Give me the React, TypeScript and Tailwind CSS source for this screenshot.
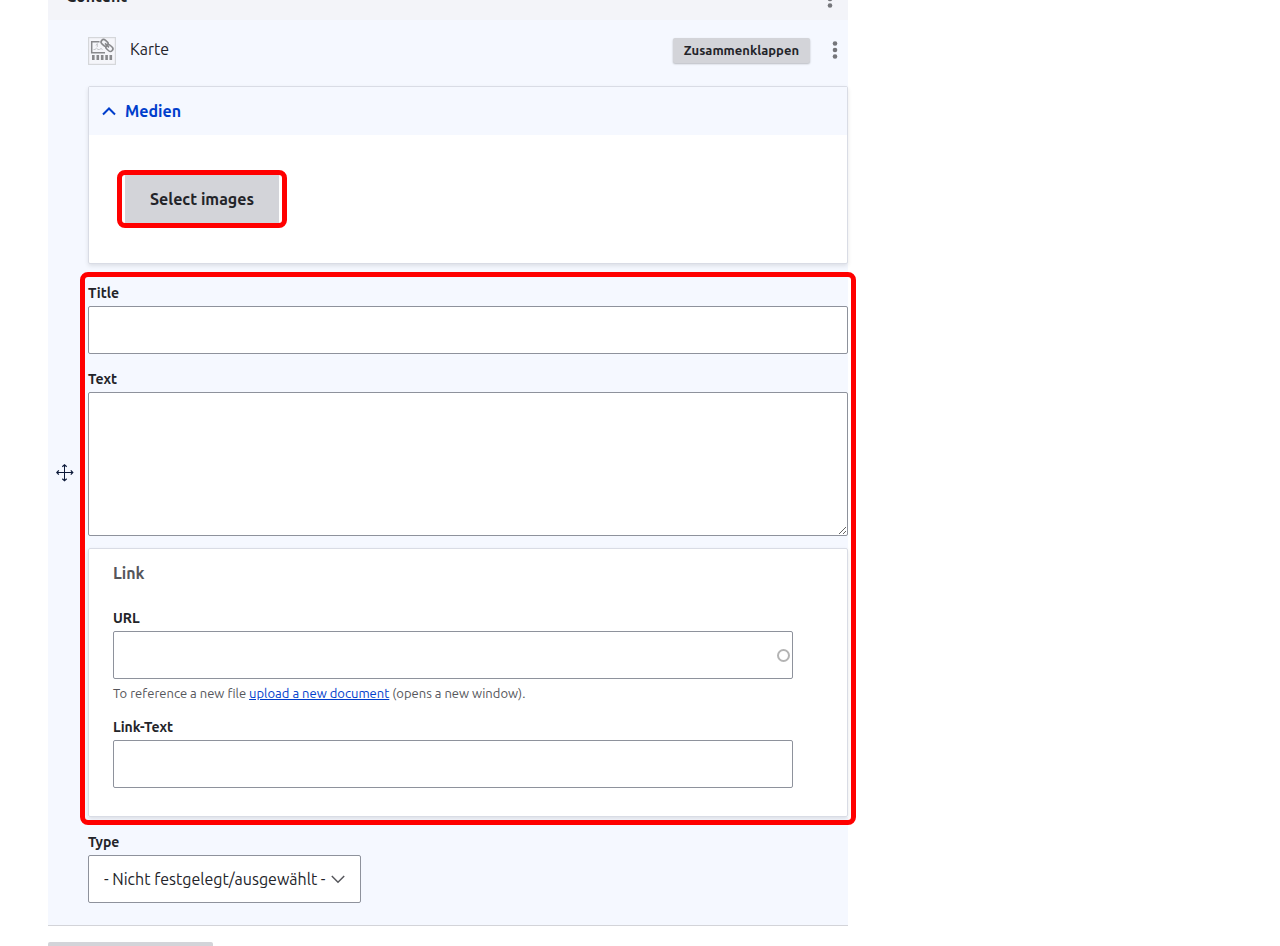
import React, { useState } from 'react';

const inputClass =
  'block w-full rounded-[2px] border border-[#8e929c] bg-white px-4 text-base text-[#232429] focus:outline-none focus:ring-2 focus:ring-[#26a769]';

const Label: React.FC<{ htmlFor: string; children: React.ReactNode }> = ({ htmlFor, children }) => (
  <label htmlFor={htmlFor} className="block text-[14px] leading-[18px] font-bold">
    {children}
  </label>
);

const Dots: React.FC = () => (
  <svg width="6" height="18" viewBox="0 0 6 18" fill="#75767b">
    <circle cx="3" cy="2.5" r="2.3" />
    <circle cx="3" cy="9" r="2.3" />
    <circle cx="3" cy="15.5" r="2.3" />
  </svg>
);

const CardTypeIcon: React.FC = () => (
  <svg width="28" height="28" viewBox="0 0 28 28" fill="none">
    <rect x="0.5" y="0.5" width="27" height="27" fill="#f5f6fa" stroke="#d5d7da" strokeWidth="1.4" />
    <path d="M11.5 4.7H3.7v11H17" stroke="#88898c" strokeWidth="1.5" />
    <path d="M5.5 12.5h1.5l1.5-1.3 1.5 1.3h1.5l1.5-1 1.5 1M9.3 6.5v3.5M8 8.5l1.3-2" stroke="#c3c5c8" />
    <g stroke="#88898c" strokeWidth="1.6">
      <rect x="12.8" y="3.4" width="7.6" height="5" rx="2.5" transform="rotate(42 16.6 5.9)" />
      <rect x="17.6" y="8.5" width="7.6" height="5" rx="2.5" transform="rotate(42 21.4 11)" />
      <path d="M17 6.4l4 4" />
    </g>
    <path d="M5.3 18v5M9.8 18v5M14.2 18v5M18.6 18v5M22.8 18v5" stroke="#88898c" strokeWidth="2.6" />
  </svg>
);

const DragIcon: React.FC = () => (
  <svg width="18" height="18" viewBox="0 0 18 18" fill="none" stroke="#0d1a3a">
    <path d="M8.5 1v16M1 8.5h16" />
    <path d="M6.3 2.8L8.5 .8l2.2 2M6.3 14.8l2.2 2 2.2-2M2.8 6.3L.8 8.5l2 2.2M14.8 6.3l2 2.2-2 2.2" strokeWidth="1.2" />
  </svg>
);

const Chevron: React.FC<{ open: boolean }> = ({ open }) => (
  <svg width="16" height="16" viewBox="0 0 16 16" fill="none" stroke="currentColor" strokeWidth="2">
    <path d={open ? 'M2 11.5l6-6 6 6' : 'M2 5l6 6 6-6'} />
  </svg>
);

export default function App() {
  const [open, setOpen] = useState(true);

  return (
    <div className="h-screen overflow-hidden bg-white px-12 font-['Ubuntu','Noto_Sans',sans-serif] text-[#232429]">
      <div className="w-full max-w-[800px]">
        {/* Field header, scrolled mostly out of view */}
        <header className="flex h-5 items-end justify-between bg-[#f3f4f9] pr-[15px] pb-3 pl-[18px]">
          <h2 className="text-base leading-6 font-bold">Content</h2>
          <button type="button" aria-label="More actions" className="leading-none">
            <Dots />
          </button>
        </header>

        <section className="flex border-b border-[#d3d4d9] bg-[#f5f8ff] pb-[22px]">
          <div className="flex w-10 shrink-0 items-center justify-center pr-1.5">
            <button type="button" aria-label="Drag to re-order" className="mt-[22px] cursor-move">
              <DragIcon />
            </button>
          </div>

          <div className="min-w-0 flex-1">
            <div className="flex h-[66px] items-center pr-[10px] pb-1.5">
              <div className="pt-0.5">
                <CardTypeIcon />
              </div>
              <span className="ml-[14px] pb-0.5 text-base leading-6">Karte</span>
              <button
                type="button"
                className="ml-auto h-[25px] rounded-[2px] bg-[#d3d4d9] px-[11px] text-[13px] leading-[25px] font-bold shadow-[0_1px_2px_rgba(0,0,0,0.25)]"
              >
                Zusammenklappen
              </button>
              <button type="button" aria-label="More actions" className="ml-[22px]">
                <Dots />
              </button>
            </div>

            {/* Media */}
            <div className="rounded-[2px] border border-[#d9dce5] bg-white shadow-[0_2px_4px_rgba(0,0,0,0.1)]">
              <button
                type="button"
                aria-expanded={open}
                onClick={() => setOpen(!open)}
                className="flex h-12 w-full items-center gap-2 bg-[#f5f8ff] px-3 text-base font-bold text-[#003ecc]"
              >
                <Chevron open={open} />
                Medien
              </button>
              {open && (
                <div className="px-7 py-[35px]">
                  <div className="inline-block rounded-lg border-[5px] border-[#ff0000] px-[3px] align-top">
                    <button type="button" className="block h-12 bg-[#d3d4d9] px-[25px] text-base font-bold">
                      Select images
                    </button>
                  </div>
                </div>
              )}
            </div>

            {/* Content fields */}
            <div className="relative mt-5">
              <div className="pointer-events-none absolute -top-3 -right-2 -bottom-2 -left-2 z-10 rounded-lg border-[5px] border-[#ff0000]" />
              <Label htmlFor="title">Title</Label>
              <input id="title" type="text" className={`${inputClass} mt-1 h-12`} />

              <div className="mt-4">
                <Label htmlFor="text">Text</Label>
                <textarea id="text" className={`${inputClass} mt-1 h-36 resize-y`} />
              </div>

              <fieldset className="mt-3 rounded-[2px] border border-[#d9dce5] bg-white pt-3 pr-[54px] pb-7 pl-6 shadow-[0_2px_4px_rgba(0,0,0,0.1)]">
                <legend className="float-left w-full text-base leading-6 font-bold text-[#55565b]">Link</legend>
                <div className="clear-both pt-6">
                  <Label htmlFor="url">URL</Label>
                  <div className="relative mt-1">
                    <input id="url" type="text" className={`${inputClass} h-12`} />
                    <span className="absolute top-[18px] right-[3px] h-[13px] w-[13px] rounded-full border-[2px] border-[#b4b4b4]" />
                  </div>
                  <p className="mt-1 text-[13px] leading-5 text-[#55565b]">
                    To reference a new file{' '}
                    <a href="#" className="text-[#003ecc] underline">
                      upload a new document
                    </a>{' '}
                    (opens a new window).
                  </p>
                </div>
                <div className="mt-[15px]">
                  <Label htmlFor="link-text">Link-Text</Label>
                  <input id="link-text" type="text" className={`${inputClass} mt-1 h-12`} />
                </div>
              </fieldset>
            </div>

            <div className="mt-4">
              <Label htmlFor="type">Type</Label>
              <div className="relative mt-1 w-[273px]">
                <select
                  id="type"
                  className="h-12 w-full appearance-none rounded-[2px] border border-[#8e929c] bg-white pl-[15px] text-base"
                >
                  <option>- Nicht festgelegt/ausgewählt -</option>
                </select>
                <svg
                  width="14"
                  height="9"
                  viewBox="0 0 14 9"
                  fill="none"
                  stroke="#55565b"
                  strokeWidth="1.5"
                  className="pointer-events-none absolute top-5 right-4"
                >
                  <path d="M.8 1l6.2 6.2L13.2 1" />
                </svg>
              </div>
            </div>
          </div>
        </section>

        <button type="button" aria-label="Add" className="mt-4 block h-10 w-[165px] rounded-[2px] bg-[#d3d4d9]" />
      </div>
    </div>
  );
}
